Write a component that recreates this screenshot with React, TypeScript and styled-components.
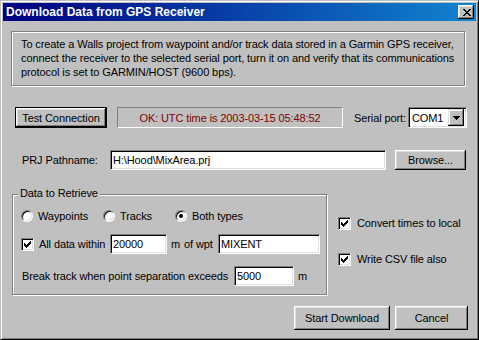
import React from 'react';
import styled, { createGlobalStyle } from 'styled-components';

const Global = createGlobalStyle`
  html, body { margin: 0; padding: 0; background: #c0c0c0; }
  body { font-family: "Liberation Sans", Arial, sans-serif; font-size: 11px; }
  * { box-sizing: border-box; }
`;

const FONT = `"Liberation Sans", Arial, sans-serif`;

const Window = styled.div`
  width: 479px;
  height: 340px;
  background: #c0c0c0;
  border: 1px solid;
  border-color: #c0c0c0 #000 #000 #c0c0c0;
  box-shadow: inset 1px 1px #fff, inset -1px -1px #808080;
  padding: 2px;
  display: flex;
  flex-direction: column;
  color: #000;
  font-family: ${FONT};
  font-size: 11px;
  letter-spacing: -0.1px;
`;

const TitleBar = styled.div`
  height: 18px;
  display: flex;
  align-items: center;
  padding: 0 2px 0 3px;
  background: linear-gradient(to right, #000080, #1084d0);
`;

const Title = styled.span`
  flex: 1;
  color: #fff;
  font-weight: bold;
  font-size: 12px;
  letter-spacing: 0;
  white-space: nowrap;
`;

const CloseButton = styled.div`
  width: 16px;
  height: 14px;
  background: #c0c0c0;
  box-shadow: inset -1px -1px #000, inset 1px 1px #fff, inset -2px -2px #808080,
    inset 2px 2px #dfdfdf;
  display: flex;
  align-items: center;
  justify-content: center;
  padding-left: 1px;
`;

const Content = styled.div`
  flex: 1;
  display: flex;
  flex-direction: column;
`;

const Message = styled.div`
  margin: 10px 0 0 8px;
  width: 454px;
  height: 55px;
  border: 1px solid #808080;
  box-shadow: inset 1px 1px #fff, 1px 1px #fff;
  padding: 5px 0 0 9px;
  line-height: 14px;
  white-space: nowrap;
`;

const Row = styled.div<{ $top: number; $left?: number }>`
  display: flex;
  align-items: center;
  margin-top: ${(p) => p.$top}px;
  margin-left: ${(p) => p.$left ?? 0}px;
`;

const Text = styled.span<{ $ml?: number; $w?: number }>`
  flex-shrink: 0;
  white-space: nowrap;
  margin-left: ${(p) => p.$ml ?? 0}px;
  ${(p) => (p.$w ? `width: ${p.$w}px;` : '')}
  line-height: 14px;
`;

const Button = styled.button<{ $w: number; $h: number; $ml?: number; $default?: boolean }>`
  flex-shrink: 0;
  width: ${(p) => p.$w}px;
  height: ${(p) => p.$h}px;
  margin: 0 0 0 ${(p) => p.$ml ?? 0}px;
  padding: 0;
  font-family: ${FONT};
  font-size: 11px;
  letter-spacing: -0.1px;
  color: #000;
  background: #c0c0c0;
  border: ${(p) => (p.$default ? '1px solid #000' : 'none')};
  box-shadow: inset -1px -1px #000, inset 1px 1px #fff, inset -2px -2px #808080,
    inset 2px 2px #dfdfdf;
  outline: none;
`;

const Status = styled.div<{ $w: number; $ml: number }>`
  flex-shrink: 0;
  width: ${(p) => p.$w}px;
  height: 21px;
  margin-left: ${(p) => p.$ml}px;
  border: 1px solid;
  border-color: #808080 #fff #fff #808080;
  color: #800000;
  display: flex;
  align-items: center;
  justify-content: center;
  white-space: nowrap;
`;

const Field = styled.input<{ $w: number; $h?: number; $ml?: number }>`
  flex-shrink: 0;
  width: ${(p) => p.$w}px;
  height: ${(p) => p.$h ?? 20}px;
  margin: 0 0 0 ${(p) => p.$ml ?? 0}px;
  padding: 0 0 0 2px;
  border: 1px solid;
  border-color: #808080 #fff #fff #808080;
  box-shadow: inset 1px 1px #000, inset -1px -1px #dfdfdf;
  background: #fff;
  font-family: ${FONT};
  font-size: 11px;
  letter-spacing: -0.1px;
  color: #000;
  outline: none;
`;

const Combo = styled.div`
  flex-shrink: 0;
  width: 59px;
  height: 21px;
  border: 1px solid;
  border-color: #808080 #fff #fff #808080;
  box-shadow: inset 1px 1px #000, inset -1px -1px #dfdfdf;
  background: #fff;
  display: flex;
  align-items: center;
  padding: 2px;
`;

const ComboText = styled.span`
  flex: 1;
  padding-left: 1px;
`;

const ComboArrow = styled.div`
  width: 16px;
  height: 17px;
  background: #c0c0c0;
  box-shadow: inset -1px -1px #000, inset 1px 1px #dfdfdf, inset -2px -2px #808080,
    inset 2px 2px #fff;
  display: flex;
  align-items: center;
  justify-content: center;
`;

const Middle = styled.div`
  display: flex;
  margin: 24px 0 0 9px;
`;

const Group = styled.div`
  width: 315px;
  height: 101px;
  border: 1px solid #808080;
  box-shadow: inset 1px 1px #fff, 1px 1px #fff;
  display: flex;
  flex-direction: column;
  padding-left: 8px;
`;

const Legend = styled.span`
  align-self: flex-start;
  margin: -9px 0 0 -3px;
  padding: 0 2px;
  line-height: 14px;
  background: #c0c0c0;
`;

const Option = styled.label<{ $w?: number }>`
  display: flex;
  align-items: center;
  flex-shrink: 0;
  ${(p) => (p.$w ? `width: ${p.$w}px;` : '')}
  line-height: 14px;
  gap: 5px;
`;

const Radio = styled.span<{ $on?: boolean }>`
  width: 12px;
  height: 12px;
  border-radius: 50%;
  border: 1px solid;
  border-color: #808080 #fff #fff #808080;
  box-shadow: inset 1px 1px #000, inset -1px -1px #dfdfdf;
  background: #fff;
  display: flex;
  align-items: center;
  justify-content: center;
  &::after {
    content: '';
    width: 4px;
    height: 4px;
    border-radius: 50%;
    background: ${(p) => (p.$on ? '#000' : 'transparent')};
  }
`;

const Box = styled.span`
  flex-shrink: 0;
  width: 13px;
  height: 13px;
  border: 1px solid;
  border-color: #808080 #fff #fff #808080;
  box-shadow: inset 1px 1px #000, inset -1px -1px #dfdfdf;
  background: #fff;
  display: flex;
  align-items: center;
  justify-content: center;
`;

const SideColumn = styled.div`
  display: flex;
  flex-direction: column;
  margin-left: 11px;
`;

const SideCheck = styled.label`
  display: flex;
  align-items: center;
  gap: 6px;
  margin-top: 22px;
  line-height: 14px;
  white-space: nowrap;
`;

const Footer = styled.div`
  display: flex;
  justify-content: flex-end;
  gap: 5px;
  margin-top: 11px;
  padding-right: 8px;
`;

const CheckMark = () => (
  <svg width="7" height="7" viewBox="0 0 7 7" shapeRendering="crispEdges">
    <rect x="6" y="0" width="1" height="1" fill="#000" />
    <rect x="5" y="1" width="2" height="1" fill="#000" />
    <rect x="0" y="2" width="1" height="1" fill="#000" />
    <rect x="4" y="2" width="3" height="1" fill="#000" />
    <rect x="0" y="3" width="2" height="1" fill="#000" />
    <rect x="3" y="3" width="3" height="1" fill="#000" />
    <rect x="0" y="4" width="5" height="1" fill="#000" />
    <rect x="1" y="5" width="3" height="1" fill="#000" />
    <rect x="2" y="6" width="1" height="1" fill="#000" />
  </svg>
);

const CloseGlyph = () => (
  <svg width="8" height="7" viewBox="0 0 8 7" shapeRendering="crispEdges">
    <rect x="0" y="0" width="2" height="1" fill="#000" />
    <rect x="6" y="0" width="2" height="1" fill="#000" />
    <rect x="1" y="1" width="2" height="1" fill="#000" />
    <rect x="5" y="1" width="2" height="1" fill="#000" />
    <rect x="2" y="2" width="4" height="1" fill="#000" />
    <rect x="3" y="3" width="2" height="1" fill="#000" />
    <rect x="2" y="4" width="4" height="1" fill="#000" />
    <rect x="1" y="5" width="2" height="1" fill="#000" />
    <rect x="5" y="5" width="2" height="1" fill="#000" />
    <rect x="0" y="6" width="2" height="1" fill="#000" />
    <rect x="6" y="6" width="2" height="1" fill="#000" />
  </svg>
);

const DownArrow = () => (
  <svg width="7" height="4" viewBox="0 0 7 4" shapeRendering="crispEdges">
    <rect x="0" y="0" width="7" height="1" fill="#000" />
    <rect x="1" y="1" width="5" height="1" fill="#000" />
    <rect x="2" y="2" width="3" height="1" fill="#000" />
    <rect x="3" y="3" width="1" height="1" fill="#000" />
  </svg>
);

export default function App() {
  return (
    <>
      <Global />
      <Window>
        <TitleBar>
          <Title>Download Data from GPS Receiver</Title>
          <CloseButton>
            <CloseGlyph />
          </CloseButton>
        </TitleBar>
        <Content>
          <Message>
            To create a Walls project from waypoint and/or track data stored in a Garmin GPS receiver,
            <br />
            connect the receiver to the selected serial port, turn it on and verify that its communications
            <br />
            protocol is set to GARMIN/HOST (9600 bps).
          </Message>

          <Row $top={21} $left={12}>
            <Button $w={92} $h={21} $default>
              Test Connection
            </Button>
            <Status $w={226} $ml={10}>OK: UTC time is 2003-03-15 05:48:52</Status>
            <Text $ml={11} $w={54}>
              Serial port:
            </Text>
            <Combo>
              <ComboText>COM1</ComboText>
              <ComboArrow>
                <DownArrow />
              </ComboArrow>
            </Combo>
          </Row>

          <Row $top={22} $left={19}>
            <Text $w={88}>PRJ Pathname:</Text>
            <Field $w={276} readOnly value={'H:\\Hood\\MixArea.prj'} />
            <Button $w={71} $h={20} $ml={9}>
              Browse...
            </Button>
          </Row>

          <Middle>
            <Group>
              <Legend>Data to Retrieve</Legend>
              <Row $top={9}>
                <Option $w={82}>
                  <Radio />
                  Waypoints
                </Option>
                <Option $w={72}>
                  <Radio />
                  Tracks
                </Option>
                <Option>
                  <Radio $on />
                  Both types
                </Option>
              </Row>
              <Row $top={11}>
                <Box>
                  <CheckMark />
                </Box>
                <Text $ml={5} $w={66}>
                  All data within
                </Text>
                <Field $w={57} $ml={5} readOnly value="20000" />
                <Text $ml={4} $w={13}>
                  m
                </Text>
                <Text $w={34}>of wpt</Text>
                <Field $w={102} readOnly value="MIXENT" />
              </Row>
              <Row $top={12}>
                <Text $ml={1} $w={212}>
                  Break track when point separation exceeds
                </Text>
                <Field $w={60} readOnly value="5000" />
                <Text $ml={4}>m</Text>
              </Row>
            </Group>
            <SideColumn>
              <SideCheck>
                <Box>
                  <CheckMark />
                </Box>
                Convert times to local
              </SideCheck>
              <SideCheck>
                <Box>
                  <CheckMark />
                </Box>
                Write CSV file also
              </SideCheck>
            </SideColumn>
          </Middle>

          <Footer>
            <Button $w={96} $h={24}>
              Start Download
            </Button>
            <Button $w={73} $h={24}>
              Cancel
            </Button>
          </Footer>
        </Content>
      </Window>
    </>
  );
}
